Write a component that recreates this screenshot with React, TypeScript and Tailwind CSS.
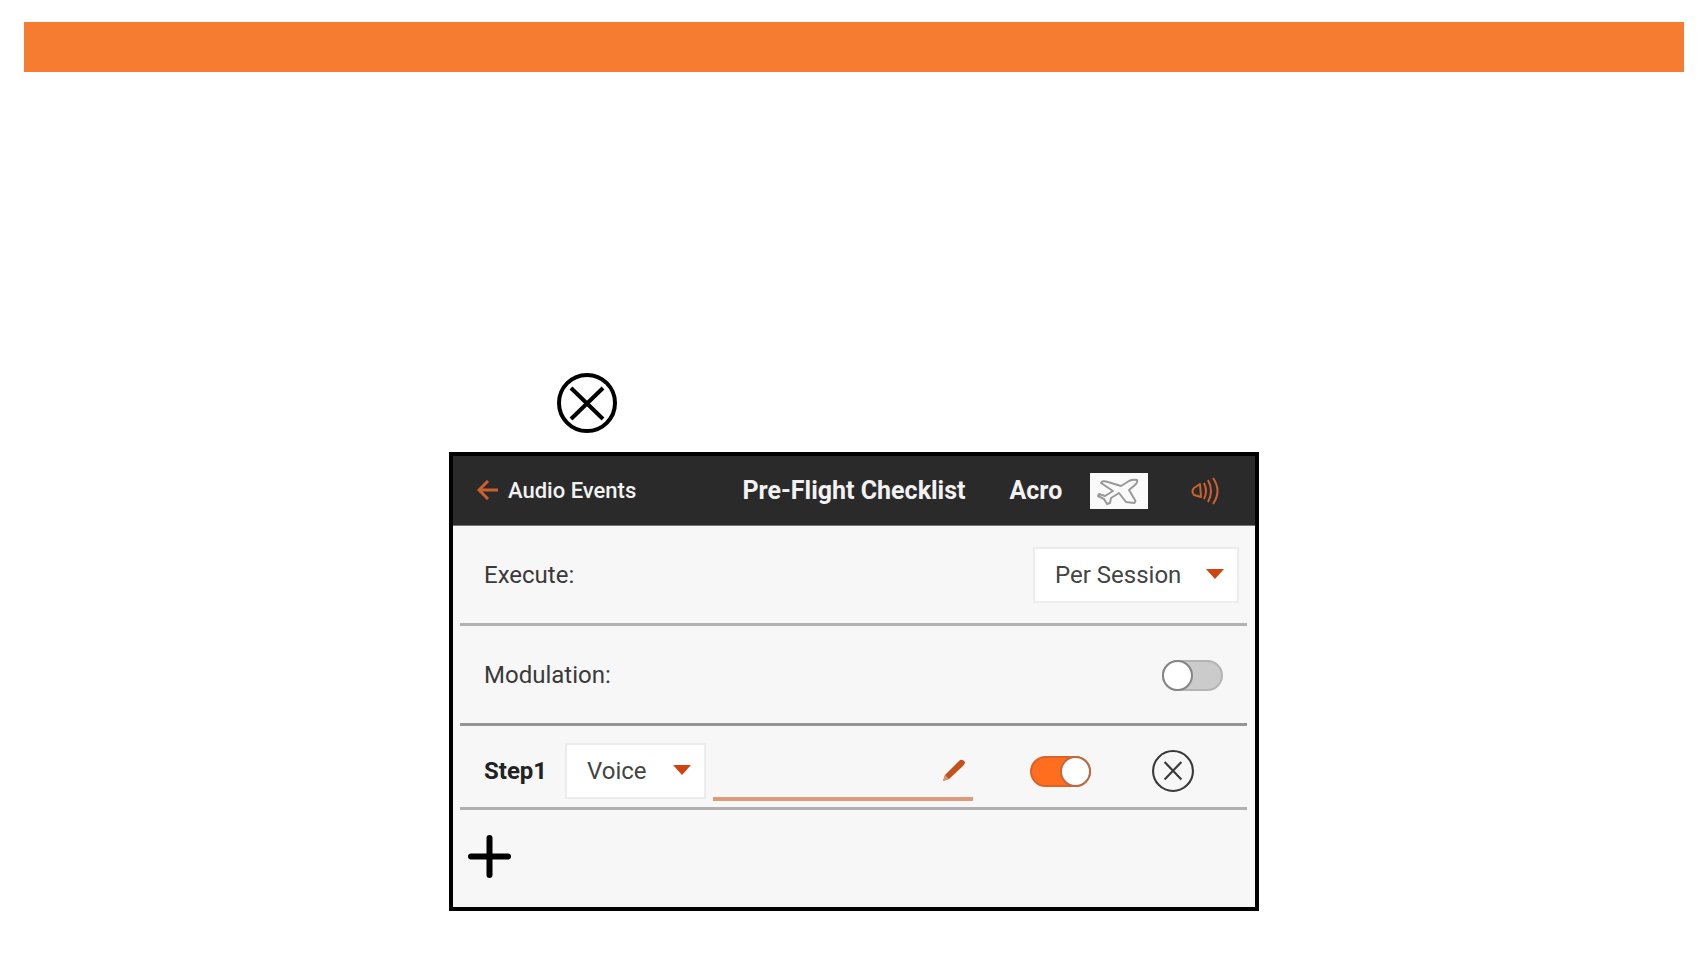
import { useState } from 'react';

const font = "font-[Roboto,'Liberation_Sans',sans-serif]";

function CloseCircle({ className, strokeWidth }: { className: string; strokeWidth: number }) {
  return (
    <svg viewBox="0 0 60 60" className={className} fill="none" stroke="currentColor" strokeWidth={strokeWidth} aria-hidden="true">
      <circle cx="30" cy="30" r={30 - strokeWidth / 2} />
      {strokeWidth > 3 ? <path d="M14 15l32 31M46 15L14 46" /> : <path d="M18 17l24 25M42 17L18 42" />}
    </svg>
  );
}

function PlaneIcon() {
  return (
    <svg viewBox="0 0 58 36" className="w-full h-full" fill="none" stroke="#999" strokeWidth="2" strokeLinejoin="round" aria-hidden="true">
      <path d="M47 7Q43 6 39 8L31 13L18 9Q12 7 11 10L14 12L23 18L15 23L9 21L8 23L14 26L17 31L20 30L21 25L29 20L36 29L44 30Q46 29 45 27L39 17L45 12Q48 9 47 7Z" />
    </svg>
  );
}

function SpeakerIcon() {
  return (
    <svg viewBox="0 0 28 30" className="w-7 h-[30px]" fill="none" stroke="#cc6231" strokeWidth="2" strokeLinejoin="round" aria-hidden="true">
      <path d="M3 12L9 8L10 21L3 19Q0 15 3 12Z" />
      <path d="M13 7Q17 15 13 23M17 4Q23 15 17 26M22 2Q31 15 22 28" />
    </svg>
  );
}

function Dropdown({ id, label, options, className }: { id: string; label: string; options: string[]; className: string }) {
  return (
    <div className={`relative h-14 ${className}`}>
      <select id={id} aria-label={label} className="appearance-none w-full h-full pl-5 bg-white border-2 border-[#ececec] text-[#444]">
        {options.map((o) => (
          <option key={o}>{o}</option>
        ))}
      </select>
      <svg viewBox="0 0 18 10" className="absolute right-[15px] top-[22px] w-[18px] h-[10px] pointer-events-none" fill="#d2420f" aria-hidden="true">
        <path d="M0 0h18L9 10z" />
      </svg>
    </div>
  );
}

function Toggle({ label, initial }: { label: string; initial: boolean }) {
  const [on, setOn] = useState(initial);
  return (
    <label className={`relative flex w-[61px] h-[31px] shrink-0 rounded-full border-2 ${on ? 'justify-end bg-[#ff6d1f] border-[#dd6226]' : 'bg-[#cbcbcb] border-[#b4b4b4]'}`}>
      <input type="checkbox" aria-label={label} checked={on} onChange={(e) => setOn(e.target.checked)} className="absolute inset-0 opacity-0" />
      <span className={`w-[31px] h-[31px] -m-[2px] rounded-full border-2 bg-white ${on ? 'border-[#bd6a43]' : 'border-[#858585]'}`} />
    </label>
  );
}

export default function App() {
  const [text, setText] = useState('');

  return (
    <div className={`px-6 pt-[22px] pb-12 bg-white ${font}`}>
      <div className="h-[50px] bg-[#f57c30]" />

      <main className="w-full max-w-[810px] mx-auto mt-[301px]">
        <CloseCircle className="w-[60px] h-[60px] ml-[108px] text-black" strokeWidth={4} />

        <section className="mt-[19px] border-4 border-black bg-[#f7f7f7] text-2xl text-[#3a3a3a]">
          <header className="grid grid-cols-[1fr_auto_1fr] items-center h-[70px] bg-[#2a2a2a] border-b border-[#777] text-[#f2f2f2]">
            <button className="flex items-center gap-[10px] pl-6 text-[22px] font-medium">
              <svg viewBox="0 0 21 20" className="w-[21px] h-5" fill="none" stroke="#c9602f" strokeWidth="3" aria-hidden="true">
                <path d="M21 10H3M11 1L2 10l9 9" />
              </svg>
              Audio Events
            </button>
            <h1 className="text-[25px] font-bold">Pre-Flight Checklist</h1>
            <div className="flex items-center justify-between pl-11 pr-9">
              <span className="text-[25px] font-bold">Acro</span>
              <div className="w-[58px] h-9 ml-7 mr-auto bg-[#fafafa]">
                <PlaneIcon />
              </div>
              <button aria-label="Volume">
                <SpeakerIcon />
              </button>
            </div>
          </header>

          <div className="pl-[7px] pr-2">
            <div className="flex items-center justify-between h-[100px] pt-px pl-6 pr-2 border-b-3 border-[#b2b2b2]">
              <label htmlFor="execute">Execute:</label>
              <Dropdown id="execute" label="Execute" options={['Per Session', 'Always']} className="w-[206px]" />
            </div>

            <div className="flex items-center justify-between h-[100px] pt-px pl-6 pr-6 border-b-3 border-[#949494]">
              <span>Modulation:</span>
              <Toggle label="Modulation" initial={false} />
            </div>

            <div className="flex items-center h-[84px] pt-[9px] pl-6 pr-[53px] border-b-3 border-[#b0b0b0]">
              <label htmlFor="step1" className="w-[81px] font-bold text-[#222]">Step1</label>
              <Dropdown id="step1" label="Step 1 type" options={['Voice', 'Tone']} className="w-[141px]" />
              <div className="relative flex-1 h-[60px] ml-[7px]">
                <input
                  aria-label="Step 1 text"
                  value={text}
                  onChange={(e) => setText(e.target.value)}
                  className="w-full h-full pl-2 pr-10 border-b-4 border-[#db9b78] outline-none"
                />
                <svg viewBox="0 0 22 22" className="absolute right-2 top-[18px] w-[22px] h-[22px]" aria-hidden="true">
                  <path d="M0 22L2 16L16 2Q19 -1 22 3Q22 5 20 7L6 20Z" fill="#c4501c" />
                  <path d="M0 22L2 16L6 20Z" fill="#dc966e" />
                </svg>
              </div>
              <div className="ml-[57px] mr-[61px]">
                <Toggle label="Step 1 enabled" initial={true} />
              </div>
              <button aria-label="Remove step 1">
                <CloseCircle className="w-[42px] h-[42px]" strokeWidth={3} />
              </button>
            </div>

            <div className="flex items-center h-[97px] pb-1 pl-2">
              <button aria-label="Add step">
                <svg viewBox="0 0 43 43" className="w-[43px] h-[43px] text-black" stroke="currentColor" strokeWidth="6" strokeLinecap="round" aria-hidden="true">
                  <path d="M21.5 3v37M3 21.5h37" />
                </svg>
              </button>
            </div>
          </div>
        </section>
      </main>
    </div>
  );
}
